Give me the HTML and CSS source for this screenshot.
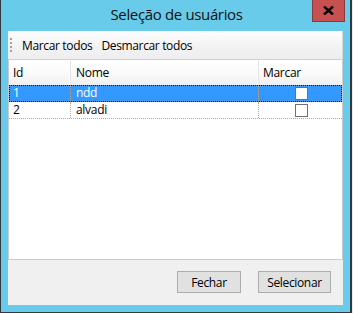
FILE: index.html
```html
<!DOCTYPE html>
<html lang="pt-BR">
<head>
    <meta charset="UTF-8">
    <title>Seleção de usuários</title>
    <link rel="stylesheet" href="styles.css">
</head>
<body>
    <div class="window">
        <div class="titlebar">
            <span class="title">Seleção de usuários</span>
            <div class="close">
                <svg width="11" height="9" viewBox="0 0 11 9">
                    <path d="M1 0.5 L10 8.5 M10 0.5 L1 8.5" stroke="#000" stroke-width="2.4"/>
                </svg>
            </div>
        </div>

        <div class="content">
            <div class="toolbar">
                <span class="grip"></span>
                <span class="tool">Marcar todos</span>
                <span class="tool">Desmarcar todos</span>
            </div>

            <div class="grid">
                <div class="row header">
                    <div class="cell col-id">Id</div>
                    <div class="cell col-nome">Nome</div>
                    <div class="cell col-marcar">Marcar</div>
                </div>
                <div class="row selected">
                    <div class="cell col-id">1</div>
                    <div class="cell col-nome">ndd</div>
                    <div class="cell col-marcar check-cell"><span class="check"></span></div>
                </div>
                <div class="row">
                    <div class="cell col-id">2</div>
                    <div class="cell col-nome">alvadi</div>
                    <div class="cell col-marcar check-cell"><span class="check"></span></div>
                </div>
            </div>

            <div class="footer">
                <button class="btn btn-fechar">Fechar</button>
                <button class="btn btn-selecionar">Selecionar</button>
            </div>
        </div>
    </div>
</body>
</html>
```

FILE: styles.css
```css
* {
    margin: 0;
    padding: 0;
    box-sizing: border-box;
}

body {
    background-color: #e9e9e9;
    font-family: "Open Sans", "Noto Sans", sans-serif;
    font-size: 12px;
    color: #000;
    width: 353px;
    height: 313px;
    overflow: hidden;
}

.window {
    width: 352px;
    height: 313px;
    background: #69cbea;
    border-left: 1px solid #2e3a40;
    border-right: 2px solid #2e3a40;
    border-bottom: 1px solid #2e3a40;
    padding: 0 7px 7px 7px;
    display: flex;
    flex-direction: column;
}

.titlebar {
    height: 31px;
    position: relative;
    display: flex;
    justify-content: center;
    padding-top: 4px;
    padding-left: 2px;
}

.title {
    font-size: 15px;
    color: #111;
    letter-spacing: -0.35px;
}

.close {
    position: absolute;
    top: 0;
    right: -2px;
    width: 33px;
    height: 22px;
    background: #c75050;
    border: 1px solid #8a3a3a;
    border-top: none;
    display: flex;
    align-items: center;
    justify-content: center;
}

.content {
    flex: 1;
    background: #f0f0f0;
    display: flex;
    flex-direction: column;
}

.toolbar {
    height: 29px;
    background: linear-gradient(#fdfdfd, #f2f2f3 60%, #eeeef0);
    border-right: 1px solid #d9d9d9;
    border-bottom: 1px solid #c8d0da;
    display: flex;
    align-items: center;
    padding-left: 2px;
    gap: 10px;
    letter-spacing: -0.35px;
}

.tool + .tool {
    margin-left: -1px;
}

.grip {
    width: 2px;
    height: 15px;
    background: repeating-linear-gradient(#a0a0a0 0 2px, transparent 2px 4px);
}

.grid {
    height: 200px;
    background: #fff;
    border: 1px solid #c9ccd2;
    border-top: none;
    display: flex;
    flex-direction: column;
    letter-spacing: -0.3px;
}

.row {
    display: flex;
    height: 17px;
    border-bottom: 1px dotted #a9a9a9;
}

.header {
    height: 24px;
    margin-top: 1px;
    border-bottom: none;
    background: linear-gradient(#ffffff, #fafafa 55%, #eeeeef);
}

.cell {
    display: flex;
    align-items: center;
    padding-left: 4px;
    border-right: 1px dotted #a9a9a9;
    line-height: 1;
}

.header .cell {
    border-right: 1px solid #e3e3e4;
    box-shadow: inset -1px 0 0 #ffffff;
    padding-bottom: 1px;
}

.col-id {
    width: 62px;
}

.col-nome {
    width: 188px;
    padding-left: 5px;
}

.col-marcar {
    flex: 1;
}

.row .col-marcar {
    border-right: none;
}

.check-cell {
    justify-content: center;
    padding-left: 0;
}

.selected {
    background: #3399ff;
    color: #fff;
    outline: 1px dotted #000;
    outline-offset: -1px;
}

.check {
    width: 13px;
    height: 13px;
    background: #fff;
    border: 1px solid #707070;
    margin-left: 2px;
}

.footer {
    flex: 1;
    display: flex;
    justify-content: flex-end;
    padding: 11px 12px 0 0;
    gap: 17px;
}

.btn {
    height: 22px;
    background: #e1e1e1;
    border: 1px solid #adadad;
    font-family: "Open Sans", "Noto Sans", sans-serif;
    font-size: 12px;
    letter-spacing: -0.35px;
    color: #000;
}

.btn-fechar {
    width: 64px;
}

.btn-selecionar {
    width: 73px;
}
```
